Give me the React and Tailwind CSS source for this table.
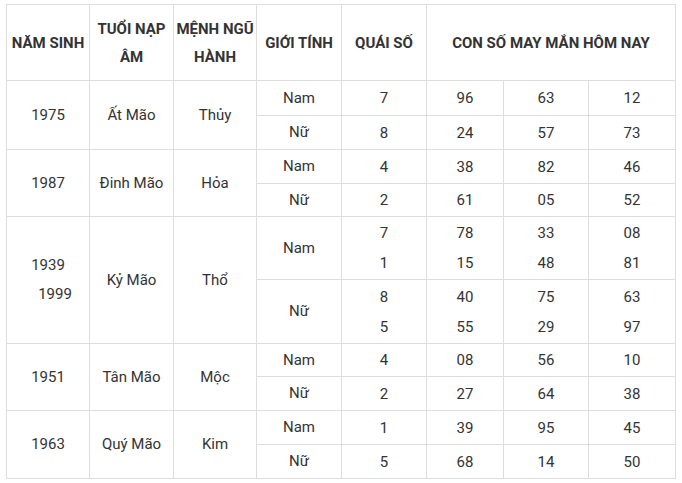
import React from "react";

const rows = [
  { year: ["1975"], tuoi: "Ất Mão", menh: "Thủy", data: [
    { sex: "Nam", h: "h-[35px]", q: ["7"], n: [["96"], ["63"], ["12"]] },
    { sex: "Nữ", h: "h-[34px]", q: ["8"], n: [["24"], ["57"], ["73"]] },
  ] },
  { year: ["1987"], tuoi: "Đinh Mão", menh: "Hỏa", data: [
    { sex: "Nam", h: "h-[34px]", q: ["4"], n: [["38"], ["82"], ["46"]] },
    { sex: "Nữ", h: "h-[33px]", q: ["2"], n: [["61"], ["05"], ["52"]] },
  ] },
  { year: ["1939", "1999"], tuoi: "Kỷ Mão", menh: "Thổ", data: [
    { sex: "Nam", h: "h-[63px]", q: ["7", "1"], n: [["78", "15"], ["33", "48"], ["08", "81"]] },
    { sex: "Nữ", h: "h-[64px]", q: ["8", "5"], n: [["40", "55"], ["75", "29"], ["63", "97"]] },
  ] },
  { year: ["1951"], tuoi: "Tân Mão", menh: "Mộc", data: [
    { sex: "Nam", h: "h-[33px]", q: ["4"], n: [["08"], ["56"], ["10"]] },
    { sex: "Nữ", h: "h-[34px]", q: ["2"], n: [["27"], ["64"], ["38"]] },
  ] },
  { year: ["1963"], tuoi: "Quý Mão", menh: "Kim", data: [
    { sex: "Nam", h: "h-[34px]", q: ["1"], n: [["39"], ["95"], ["45"]] },
    { sex: "Nữ", h: "h-[34px]", q: ["5"], n: [["68"], ["14"], ["50"]] },
  ] },
];

const cell = "border border-[#dddddd] text-center align-middle p-0";

const Lines = ({ items }) => (
  <div className="flex flex-col items-center leading-[30px]">
    {items.map((t, i) => (
      <span key={i}>{t}</span>
    ))}
  </div>
);

const App = () => {
  return (
    <div className="min-h-screen bg-white pt-[4px] pl-[6px] font-['Roboto',sans-serif] text-[15px] text-[#333333]">
      <table className="table-fixed border-collapse w-[669px]">
        <colgroup>
          <col className="w-[83px]" />
          <col className="w-[84px]" />
          <col className="w-[83px]" />
          <col className="w-[85px]" />
          <col className="w-[85px]" />
          <col className="w-[77px]" />
          <col className="w-[85px]" />
          <col className="w-[87px]" />
        </colgroup>
        <thead>
          <tr className="h-[76px] font-bold uppercase leading-[28px]">
            <th className={cell}>NĂM SINH</th>
            <th className={cell}>TUỔI NẠP<br />ÂM</th>
            <th className={cell}>MỆNH NGŨ<br />HÀNH</th>
            <th className={cell}>GIỚI TÍNH</th>
            <th className={cell}>QUÁI SỐ</th>
            <th className={cell} colSpan={3}>CON SỐ MAY MẮN HÔM NAY</th>
          </tr>
        </thead>
        <tbody>
          {rows.map((r) =>
            r.data.map((d, i) => (
              <tr key={r.tuoi + d.sex} className={d.h}>
                {i === 0 && (
                  <>
                    <td className={cell} rowSpan={2}>
                      {r.year.length === 1 ? (
                        r.year[0]
                      ) : (
                        <div className="flex flex-col items-center leading-[29px]">
                          <span>{r.year[0]}</span>
                          <span className="pl-[14px]">{r.year[1]}</span>
                        </div>
                      )}
                    </td>
                    <td className={cell} rowSpan={2}>{r.tuoi}</td>
                    <td className={cell} rowSpan={2}>{r.menh}</td>
                  </>
                )}
                <td className={cell}>{d.sex}</td>
                <td className={cell}><Lines items={d.q} /></td>
                {d.n.map((n, k) => (
                  <td key={k} className={cell}><Lines items={n} /></td>
                ))}
              </tr>
            ))
          )}
        </tbody>
      </table>
    </div>
  );
};

export default App;
